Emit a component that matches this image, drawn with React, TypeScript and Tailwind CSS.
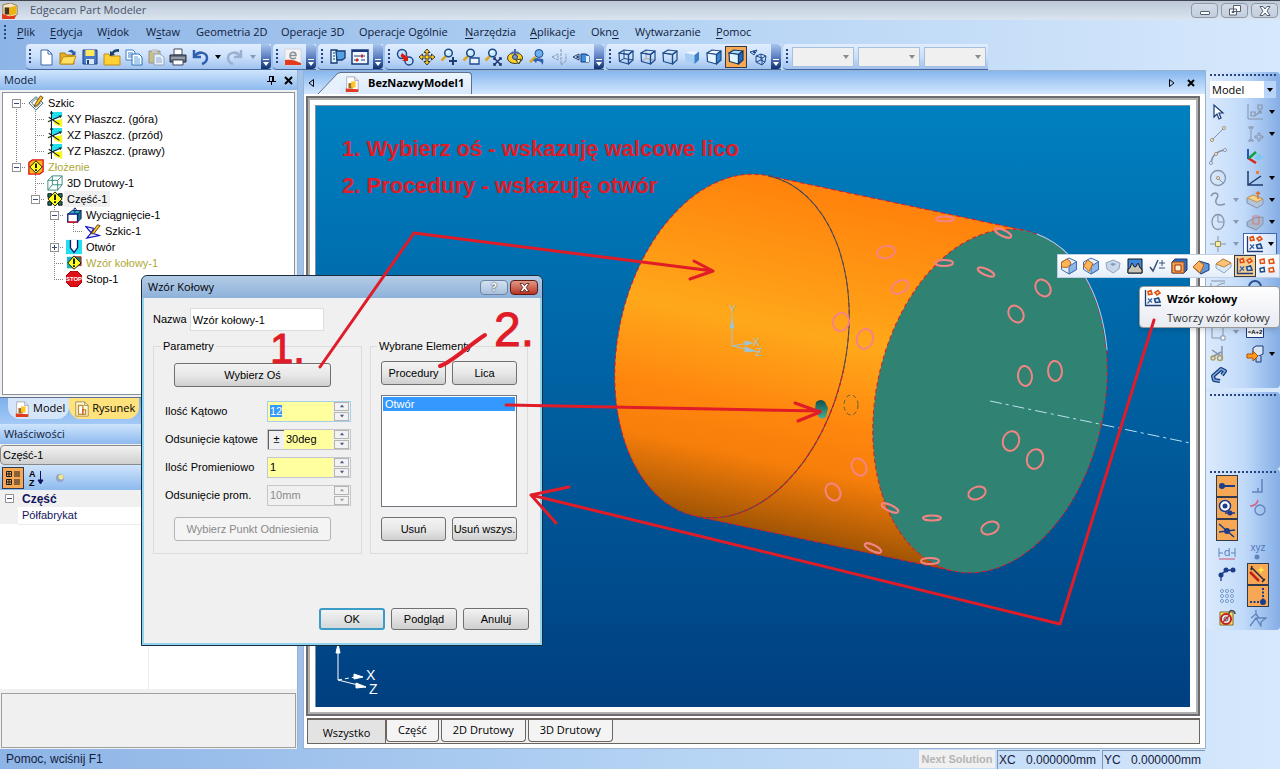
import type { ReactNode } from 'react'

const UI = "font-['Open_Sans','Noto_Sans',sans-serif]"
const SANS = "font-['Liberation_Sans',Arial,sans-serif]"

// ---------- icon helpers ----------

function Ic({ children, className = 'w-[18px] h-[18px]' }: { children: ReactNode; className?: string }) {
  return (
    <svg viewBox="0 0 18 18" fill="none" className={`shrink-0 ${className}`} aria-hidden="true">
      {children}
    </svg>
  )
}

type CubeProps = { top?: string; front?: string; side?: string; stroke?: string; wire?: boolean; hidden?: string }

function Cube({ top = 'none', front = 'none', side = 'none', stroke = '#1d4a8a', wire = false, hidden = '#1d4a8a' }: CubeProps) {
  return (
    <Ic>
      {wire && <path d="M7 2.500v8M7 10.500l-5 3M7 10.500l9 1.500" stroke={hidden} />}
      <g stroke={stroke} strokeWidth="1.2" strokeLinejoin="round">
        <path d="M2 5 7 2 16 3 11.500 6.500z" fill={top} />
        <path d="M2 5 11.500 6.500V16L2.500 13.500z" fill={front} />
        <path d="M11.500 6.500 16 3v9L11.500 16z" fill={side} />
      </g>
    </Ic>
  )
}

// solid block with one orange facet
function Facet({ d }: { d: string }) {
  return (
    <Ic>
      <path d="M9 1 16.500 4.500v8L9 17l-7.500-4.500V5z" fill="#e4effb" stroke="#3f6cae" />
      <path d="M9 9.500 16.500 4.500v8L9 17z" fill="#8fb6e8" stroke="#3f6cae" />
      <path d={d} fill="#ffb458" stroke="#b8661c" strokeLinejoin="round" />
    </Ic>
  )
}

function Lens() {
  return (
    <>
      <path d="M6.500 7.500 1.500 12.500" stroke="#d8a820" strokeWidth="2.500" />
      <circle cx="8.500" cy="5" r="3.800" fill="#c8ecff" stroke="#1d4a8a" strokeWidth="1.500" />
      <circle cx="7.500" cy="4" r="1.200" fill="#fff" />
    </>
  )
}

function DocIcon({ className }: { className?: string }) {
  return (
    <Ic className={className}>
      <path d="M3 1h9l4 4v12H3z" fill="#fff" stroke="#a9a9b4" />
      <path d="M12 1v4h4" fill="#e4e4ee" stroke="#a9a9b4" />
      <path d="M2 14 16 15v3H2z" fill="#e23a1c" />
      <path d="M5 8h5v6H5z" fill="#9a6a28" />
      <path d="M8 6h5v7H8z" fill="#ffc629" />
    </Ic>
  )
}

function SheetIcon() {
  return (
    <Ic className="w-4 h-4">
      <path d="M2 1h10l4 4v12H2z" fill="#fff8dc" stroke="#a08a50" />
      <path d="M12 1v4h4" stroke="#a08a50" />
      <path d="M5 5h5v5h3v5H5z" fill="#fff" stroke="#c09020" strokeWidth="1.500" />
      <path d="M10 9v6" stroke="#d83c20" strokeWidth="1.500" />
    </Ic>
  )
}

function PatternIcon() {
  return (
    <Ic>
      <path d="M1.500 1v15.500H17" stroke="#1f3c78" strokeWidth="1.300" />
      <path d="M3.500 14.500 8 9.500M4 9.500l4 4" stroke="#3a66a8" strokeWidth="1.300" />
      <g stroke="#e05010" strokeWidth="1.600" fill="#fff0d8">
        <path d="m4 2.500 3-1 1 3.500-3.500.500z" />
        <path d="m11 3.500 3-2 2 2.500-3 2z" />
      </g>
      <path d="m10.500 10 4-1 1.500 4-4.500.500z" stroke="#1d4a8a" strokeWidth="1.600" fill="#d8e8f8" />
    </Ic>
  )
}

function RectPatternIcon() {
  return (
    <Ic>
      <g strokeWidth="1.500" fill="#fff4e0">
        <path d="m2 3 4-1 .500 4-4 .500z" stroke="#e05010" />
        <path d="m11 3 4-1 1 4-4.500.500z" stroke="#e05010" />
        <path d="m2 11.500 4-1 .500 4-4 .500z" stroke="#1d4a8a" />
        <path d="m11 11.500 4-1 1 4-4.500.500z" stroke="#e05010" />
      </g>
    </Ic>
  )
}

function Tri({ className = 'text-black' }: { className?: string }) {
  return (
    <svg viewBox="0 0 6 4" className={`w-[6px] h-1 shrink-0 ${className}`} aria-hidden="true">
      <path d="M0 0h6L3 4z" fill="currentColor" />
    </svg>
  )
}

// ---------- top toolbars ----------

const GRAY = '#8593aa'

const fileTools: [string, ReactNode][] = [
  ['Nowy', <Ic><path d="M4 2h7l4 4v11H4z" fill="#fff" stroke="#3f66a8" /><path d="M11 2v4h4" stroke="#3f66a8" /></Ic>],
  ['Otwórz', <Ic><path d="M1 5h5l1 2h8v9H1z" fill="#e8ad22" stroke="#b07a10" /><path d="m4 9 13-1-3 8H1z" fill="#ffe060" stroke="#c08c18" /><path d="M9 4c2-3 5-3 6 0l1.500-1v4h-4l1.200-1c-1-2-3-2-4.700-2" fill="#2a5cb0" /></Ic>],
  ['Zapisz', <Ic><path d="M2 2h14v14H2z" fill="#4a78c8" stroke="#1c3f84" /><path d="M4.500 2h9v6h-9z" fill="#ffe85a" /><path d="M5 11h8v5H5z" fill="#dce8f6" /><path d="M6 12h2v4H6z" fill="#1c3f84" /></Ic>],
  ['Importuj', <Ic><path d="M1 6h5l1 2h10v9H1z" fill="#ffd034" stroke="#c08c18" /><path d="M16 1c-4 0-6 1-7 3L7 3v5l5-1-1.500-1.500C12 4 14 3.500 16 4z" fill="#1c3f64" /></Ic>],
  ['Kopiuj', <Ic><path d="M1 2h7l2 2v8H1z" fill="#fff" stroke="#3a7ec8" /><path d="M3 5h5M3 7h5M3 9h5" stroke="#3a7ec8" /><path d="M7 6h7l3 3v8H7z" fill="#fff" stroke="#2670c0" /><path d="M9 9h4M9 11h6M9 13h6M9 15h6" stroke="#58a0e0" /></Ic>],
  ['Wklej', <Ic><path d="M2 3h11v12H2z" fill="#cbbf80" stroke="#8e9098" /><path d="M5 1h5v4H5z" fill="#c3c8d2" /><path d="M7 6h6l4 3v8H7z" fill="#e8f0fa" stroke="#8fa6c6" /><path d="M9 10h5M9 12h6M9 14h6" stroke="#8fa6c6" /></Ic>],
  ['Drukuj', <Ic><path d="M5 1h8v6H5z" fill="#fff" stroke="#404858" /><path d="M1 7h16v7H1z" fill="#6a7280" stroke="#252c3a" /><path d="M2 10h14" stroke="#c0c8d6" /><path d="M4 12h10v5H4z" fill="#fff" stroke="#404858" /></Ic>],
]

const viewTools: [string, ReactNode][] = [
  ['Obrót', <Ic><circle cx="6" cy="6" r="4.500" fill="#bfe0ff" stroke="#1d4a8a" strokeWidth="1.500" /><circle cx="13" cy="13" r="4" fill="#bfe0ff" stroke="#1d4a8a" strokeWidth="1.500" /><path d="m6 5 5 4 1-2v6H6l2-1.500L4.500 8z" fill="#d81c10" /></Ic>],
  ['Przesuń', <Ic><path d="m9 1 3 3.500h-2V8h3.500V6L17 9l-3.500 3v-2H10v3.500h2L9 17l-3-3.500h2V10H4.500v2L1 9l3.500-3v2H8V4.500H6z" fill="#ffd020" stroke="#3a3a30" /></Ic>],
  ['Powiększ', <Ic><Lens /><path d="M13 9v8M9 13h8" stroke="#1d3a70" strokeWidth="2" /></Ic>],
  ['Okno', <Ic><Lens /><path d="M8 10h9v6H8z" fill="#eaf4ff" stroke="#1d4a8a" strokeWidth="1.300" /></Ic>],
  ['Dopasuj', <Ic><Lens /><path d="m10 10 7 7m0-7-7 7" stroke="#1d3a70" strokeWidth="1.500" /><path d="M10 12v-2h2m3 0h2v2m0 3v2h-2m-3 0h-2v-2" stroke="#1d3a70" strokeWidth="1.500" /></Ic>],
  ['Obróć widok', <Ic><ellipse cx="9" cy="10" rx="7.500" ry="5.500" fill="#ffd020" stroke="#3a3a30" /><path d="M9 1v6M5 6c2-3 6-3 8 0" stroke="#4a68a8" strokeWidth="2" /><circle cx="9" cy="9" r="2.500" fill="#7898c8" stroke="#26406e" /><path d="m10 12 5-1-2 5z" fill="#fff8a0" stroke="#3a3a30" /></Ic>],
  ['Poprzedni', <Ic><circle cx="11" cy="5.500" r="4" fill="#68b0f0" stroke="#1d4a8a" /><path d="M7.500 9 2 14" stroke="#d8a820" strokeWidth="2.500" /><path d="m8 10 7 1c1 3 0 5-1 6 0-3-2-4-5-4l-1 2-3-3z" fill="#2f5fae" /></Ic>],
  ['Normalny', <Ic><path d="m2 9 6-3v6zM11 1v16l5-4V6" stroke={GRAY} strokeDasharray="3 1" /></Ic>],
  ['Widok', <Ic><path d="m1 9 6-3v6z" fill="#e8f2ff" stroke="#1d3a70" /><circle cx="5.500" cy="9" r="1.200" fill="#1d3a70" /><path d="M9 6h5l3 2v6H9z" fill="#3f8fe0" stroke="#173a78" /><path d="M14 8h3v6h-3z" fill="#dff0ff" /></Ic>],
]

const shadeTools: [string, ReactNode][] = [
  ['Krawędziowy', <Cube wire />],
  ['Ukryte szare', <Cube wire hidden="#b0a4a0" />],
  ['Ukryte', <Cube />],
  ['Cieniowany', <Ic><path d="m2 5 5-2 9 1-4.500 3z" fill="#eaf6ff" /><path d="m2 5 9.500 2v9L2.500 13.500z" fill="#a6cef4" /><path d="M11.500 7 16 3.500V12l-4.500 4z" fill="#3b7fc8" /></Ic>],
  ['Przezroczysty', <Cube front="#e6f4ff" side="#3c86d0" top="#f4faff" />],
  ['Cieniowany z krawędziami', <Cube top="#a8dcff" front="#dff4ff" side="#2668b4" stroke="#123870" />],
  ['Perspektywa', <Ic><path d="m1 4 7-2-3 5z" stroke="#1d4a8a" /><circle cx="5" cy="4" r="1.200" fill="#1d4a8a" /><path d="m7 8 5-2 5 2-4 2zM7 8v6l6 3v-7M17 8l-1 6-3 3M12 6v6l-5 2m5-2 4 2" stroke="#1d4a8a" /></Ic>],
]

function Grip() {
  return <span className="w-[2px] h-[15px] shrink-0 bg-[repeating-linear-gradient(#27457f_0_2px,transparent_2px_4px)]" />
}

function ToolBar({ children, overflow = true }: { children: ReactNode; overflow?: boolean }) {
  return (
    <div className="flex h-[26px] rounded-l border-b border-[#3f66a0] bg-linear-to-b from-[#e0edfe] via-[#cbe0fb] to-[#a0c2ee]">
      <div className="flex items-center pl-[3px] pr-[2px] gap-1">
        <Grip />
        <div className="flex items-center">{children}</div>
      </div>
      {overflow && (
        <button aria-label="Więcej przycisków" className="w-[10px] flex flex-col items-center justify-end gap-[2px] pb-[3px] rounded-r-sm bg-linear-to-b from-[#a9c5ee] via-[#6083c4] to-[#12306f]">
          <span className="w-[6px] h-px bg-white" />
          <Tri className="text-white" />
        </button>
      )}
    </div>
  )
}

function ToolButton({ label, active, children }: { label: string; active?: boolean; children: ReactNode }) {
  return (
    <button
      aria-label={label}
      className={`w-[22px] h-[22px] shrink-0 flex items-center justify-center ${active ? 'bg-[#f6a855] border border-[#333a4c]' : ''}`}
    >
      {children}
    </button>
  )
}

function EmptyCombo({ label }: { label: string }) {
  return (
    <div className="relative w-[62px] mr-1 last:mr-0">
      <select disabled aria-label={label} className="block appearance-none w-full h-5 bg-[#f0f0f0] border border-[#a9c0dd]" />
      <span className="absolute right-[5px] top-2"><Tri className="text-[#8a8a8a]" /></span>
    </div>
  )
}

const menu: [string, string, string, string][] = [
  ['', 'P', 'lik', 'w-[33px]'],
  ['', 'E', 'dycja', 'w-[47px]'],
  ['W', 'i', 'dok', 'w-[49px]'],
  ['W', 's', 'taw', 'w-[50px]'],
  ['Geometria 2D', '', '', 'w-[85px]'],
  ['Operacje 3D', '', '', 'w-[78px]'],
  ['Operacje Ogólnie', '', '', 'w-[106px]'],
  ['', 'N', 'arzędzia', 'w-[65px]'],
  ['', 'A', 'plikacje', 'w-[61px]'],
  ['Okn', 'o', '', 'w-[44px]'],
  ['Wytwarzanie', '', '', 'w-[81px]'],
  ['', 'P', 'omoc', 'w-[50px]'],
]

function TopBars() {
  const winBtn = 'w-[27px] h-[15px] flex items-center justify-center border border-[#8d99aa] rounded-sm bg-linear-to-b from-[#d3dbe6] to-[#c3cedd]'
  return (
    <header>
      <div className="h-5 flex items-center justify-between border-t border-[#40444e] bg-linear-to-b from-[#bdc8d8] to-[#dbe5f0] px-[2px]">
        <div className="flex items-center gap-3 text-[#47536a]">
          <Ic className="w-4 h-4">
            <path d="M1 2 10 0l7 3v10l-8 4-8-3z" fill="#f3e6c8" stroke="#8d7340" />
            <path d="m8 5 8-2v9l-8 3z" fill="#eeb312" />
            <path d="M3 5h5v8H3z" fill="#4a3418" />
            <path d="m0 12 8 3 8-1-2 4H0z" fill="#e23a1c" />
          </Ic>
          <span className="text-[11px]">Edgecam Part Modeler</span>
        </div>
        <div className="flex gap-[3px]">
          <button aria-label="Minimalizuj" className={winBtn}>
            <span className="w-[10px] h-1 mt-1 border border-[#555f70] bg-white rounded-[1px]" />
          </button>
          <button aria-label="Przywróć" className={winBtn}>
            <svg viewBox="0 0 12 11" className="w-3 h-[11px]" fill="#fff" stroke="#555f70">
              <path d="M4.500.500h7v6h-7zM.500 4h7v6h-7z" />
              <path d="M3 6.500h2v1H3z" />
            </svg>
          </button>
          <button aria-label="Zamknij" className={winBtn}>
            <svg viewBox="0 0 12 10" className="w-3 h-[10px]" fill="#fff" stroke="#555f70">
              <path d="M1 .500h3l2 2.500L8 .500h3L8 5l3 4.500H8L6 7 4 9.500H1L4 5z" />
            </svg>
          </button>
        </div>
      </div>

      <nav className="h-6 flex items-center pl-1 text-[11px] text-[#10203c]">
        <span className="w-[13px] flex"><Grip /></span>
        {menu.map(([before, key, after, width]) => (
          <button key={before + key + after} className={`${width} text-left whitespace-nowrap`}>
            {before}<u className="underline-offset-2">{key}</u>{after}
          </button>
        ))}
      </nav>

      <div className="h-[26px] flex gap-[2px] pl-[26px]">
        <ToolBar>
          {fileTools.map(([label, icon]) => <ToolButton key={label} label={label}>{icon}</ToolButton>)}
          <ToolButton label="Cofnij">
            <Ic><path d="M3 2v7h7" stroke="#2f5fae" strokeWidth="2.500" /><path d="M4 8c4-6 12-3 12 2 0 3-2 5-5 6" stroke="#2f5fae" strokeWidth="2.500" /></Ic>
          </ToolButton>
          <button aria-label="Lista cofania" className="w-[13px] flex justify-center"><Tri /></button>
          <ToolButton label="Ponów">
            <Ic><path d="M15 2v7H8" stroke="#9ab0d0" strokeWidth="2.500" /><path d="M14 8C10 2 2 5 2 10c0 3 2 5 5 6" stroke="#9ab0d0" strokeWidth="2.500" /></Ic>
          </ToolButton>
          <button aria-label="Lista ponawiania" className="w-[13px] flex justify-center"><Tri className="text-[#8a98b0]" /></button>
        </ToolBar>
        <ToolBar>
          <ToolButton label="Edgecam">
            <Ic><path d="M1 1h16v16H1z" fill="#f4f4f4" stroke="#d0d4dc" /><path d="M1 12c5-1 10 0 16 3v2H1z" fill="#e23a1c" /><path d="M6 7.500h6c0-4-6-4.500-6 0 0 4 4 4 6 2" stroke="#8a8f98" strokeWidth="1.500" /></Ic>
          </ToolButton>
        </ToolBar>
        <ToolBar>
          <ToolButton label="Właściwości">
            <Ic><path d="M2 2h6v13H2z" fill="#dff0ff" stroke="#173a78" strokeWidth="1.300" /><path d="M7 3h9v7l-3 2H8z" fill="#58a0e0" stroke="#173a78" strokeWidth="1.300" /><path d="M4 5h2M4 8h2M4 11h2" stroke="#173a78" /></Ic>
          </ToolButton>
          <ToolButton label="Opcje">
            <Ic><path d="M1 2h16v14H1z" fill="#f2f7ff" stroke="#173a78" strokeWidth="1.500" /><path d="M1 3h16" stroke="#173a78" strokeWidth="2" /><path d="M3 8h11M3 12h5m2 0h4" stroke="#173a78" /><path d="M10 6.500h2v3h-2zM5 10.500h2v3H5z" fill="#d82818" /></Ic>
          </ToolButton>
        </ToolBar>
        <ToolBar>
          {viewTools.map(([label, icon]) => <ToolButton key={label} label={label}>{icon}</ToolButton>)}
        </ToolBar>
        <ToolBar>
          {shadeTools.map(([label, icon], i) => <ToolButton key={label} label={label} active={i === 5}>{icon}</ToolButton>)}
        </ToolBar>
        <ToolBar overflow={false}>
          <EmptyCombo label="Warstwa" />
          <EmptyCombo label="Kolor" />
          <EmptyCombo label="Styl linii" />
        </ToolBar>
      </div>
    </header>
  )
}

// ---------- left side: model tree and properties ----------

const treeIcons: Record<string, ReactNode> = {
  sketch: <Ic className="w-4 h-4"><path d="m1 9 8-7 8 7-8 8z" fill="#fff" stroke="#2a5a68" /><path d="m4 9 5-5 5 5-5 5z" stroke="#2a5a68" /><path d="m8 10 6-9 3 2-6 8-4 2z" fill="#ffc020" stroke="#5a4010" /></Ic>,
  plane: <Ic className="w-4 h-4"><path d="M5 1h12v5L6 10z" fill="#20e0f0" /><path d="m7 11 10-2v9l-8-3z" fill="#f8f810" /><path d="M5 0v18M1 12l14-6M2 7l12 8" stroke="#102020" strokeWidth="1.200" /><path d="m5 0-2 3h4zM17 5l-4 0 2 3z" fill="#102020" /></Ic>,
  assembly: <Ic className="w-4 h-4"><path d="M1 4 5 1h12v13l-4 3H1z" fill="#ffb820" stroke="#e01010" strokeWidth="1.500" /><path d="m9 2 7 7-7 7-7-7z" fill="#ffff20" stroke="#000" /><path d="M9 5v5m0 1.500v2" stroke="#000" strokeWidth="2" /></Ic>,
  wire: <Ic className="w-4 h-4"><path d="M1 6h11v11H1zM6 1h11v10H6zM1 6l5-5m6 5 5-5m-5 16 5-6M1 17l5-6" stroke="#2a8478" /></Ic>,
  part: <Ic className="w-4 h-4"><path d="M1 3h4v4H1zm12 0h4v4h-4zM1 12h4v4H1zm12 0h4v4h-4z" fill="#207868" stroke="#000" /><path d="m9 1 8 8-8 8-8-8z" fill="#ffff20" stroke="#000" /><path d="M9 4v6m0 1.500v2" stroke="#000" strokeWidth="2" /></Ic>,
  extrude: <Ic className="w-4 h-4"><path d="m2 8 5-4h10l-4 4z" fill="#30b0c0" stroke="#0a1a60" /><path d="m13 8 4-4v9l-4 4z" fill="#187888" stroke="#0a1a60" /><path d="M2 8h11v9H2z" fill="#fff" stroke="#0a1a80" strokeWidth="1.500" /><path d="M2 17h11" stroke="#e01010" strokeWidth="1.500" /><path d="M10 7V1M8 3l2-2 2 2" stroke="#0a1a80" /></Ic>,
  sketch2: <Ic className="w-4 h-4"><path d="m1 4 9 2-3 5 9 3-14 3 5-6z" fill="#e8e8ff" stroke="#1010c0" strokeWidth="1.300" /><path d="m7 12 7-10 3 1-7 9z" fill="#ffc020" stroke="#5a4010" /></Ic>,
  hole: <Ic className="w-4 h-4"><path d="M0 1h18v16H0z" fill="#20e0f0" /><path d="M5 1h8v10l-4 4-4-4z" fill="#fff" /><path d="M5 1v9l4 5 4-5V1" stroke="#101070" strokeWidth="1.500" /></Ic>,
  pattern: <Ic className="w-4 h-4"><path d="M1 2h7v13H1z" fill="#20b0c0" /><path d="M10 2h7v10h-7z" fill="#208070" stroke="#c01010" /><path d="m9 1 8 8-8 7-7-7z" fill="#ffff20" stroke="#000" /><path d="M9 4v6m0 1.500v2" stroke="#000" strokeWidth="2" /></Ic>,
}

function StopIcon() {
  return (
    <svg viewBox="0 0 16 16" className="w-4 h-4 shrink-0" aria-hidden="true">
      <path d="M5 0h6l5 5v6l-5 5H5l-5-5V5z" fill="#e01018" stroke="#900" />
      <text x="8" y="10" textAnchor="middle" fontSize="6" fontWeight="bold" fill="#fff" fontFamily="Liberation Sans">STOP</text>
    </svg>
  )
}

// each cell lists the guide lines it holds: u(p), d(own), r(ight), and a +/- box
const tree: { cells: string[]; icon: string; label: string; tone?: string }[] = [
  { cells: ['dr-'], icon: 'sketch', label: 'Szkic' },
  { cells: ['ud', 'udr'], icon: 'plane', label: 'XY Płaszcz. (góra)' },
  { cells: ['ud', 'udr'], icon: 'plane', label: 'XZ Płaszcz. (przód)' },
  { cells: ['ud', 'ur'], icon: 'plane', label: 'YZ Płaszcz. (prawy)' },
  { cells: ['ur-'], icon: 'assembly', label: 'Złożenie', tone: 'text-[#b0a838]' },
  { cells: ['', 'udr'], icon: 'wire', label: '3D Drutowy-1' },
  { cells: ['', 'ur-'], icon: 'part', label: 'Część-1', tone: 'bg-[#f0f0f0]' },
  { cells: ['', '', 'udr-'], icon: 'extrude', label: 'Wyciągnięcie-1' },
  { cells: ['', '', 'ud', 'ur'], icon: 'sketch2', label: 'Szkic-1' },
  { cells: ['', '', 'udr+'], icon: 'hole', label: 'Otwór' },
  { cells: ['', '', 'udr'], icon: 'pattern', label: 'Wzór kołowy-1', tone: 'text-[#b0a838]' },
  { cells: ['', '', 'ur'], icon: 'stop', label: 'Stop-1' },
]

function TreeCell({ spec }: { spec: string }) {
  const box = spec.includes('+') || spec.includes('-')
  return (
    <svg viewBox="0 0 19 16" className="w-[19px] h-4 shrink-0" shapeRendering="crispEdges" fill="none" aria-hidden="true">
      <g stroke="#808080" strokeDasharray="1 1">
        {spec.includes('u') && <path d="M9.500 0v8" />}
        {spec.includes('d') && <path d="M9.500 8v8" />}
        {spec.includes('r') && <path d="M9 8.500h10" />}
      </g>
      {box && <path d="M5.500 4.500h8v8h-8z" fill="#fff" stroke="#919191" />}
      {box && <path d={spec.includes('+') ? 'M7 8.500h5M9.500 6v5' : 'M7 8.500h5'} stroke="#3a4a78" />}
    </svg>
  )
}

function PanelHeader({ children, tools }: { children: ReactNode; tools?: ReactNode }) {
  return (
    <div className="h-5 flex items-center justify-between px-1 text-[11px] text-[#10203c] bg-linear-to-b from-[#cfe4fc] to-[#8dbaee]">
      <h2>{children}</h2>
      {tools}
    </div>
  )
}

function LeftPanels() {
  return (
    <aside className="w-[298px] shrink-0 flex flex-col bg-[#f0f0f0] border-r border-[#9db2cc]">
      <PanelHeader
        tools={
          <div className="flex gap-2">
            <button aria-label="Przypnij">
              <svg viewBox="0 0 9 9" className="w-[9px] h-[9px]" stroke="#000" fill="none" shapeRendering="crispEdges"><path d="M2.500 5V.500h4V5M5.500 0v5M0 5.500h9M4.500 5v4" /></svg>
            </button>
            <button aria-label="Zamknij panel">
              <svg viewBox="0 0 9 9" className="w-[9px] h-[9px]" stroke="#000" strokeWidth="2"><path d="m1 1 7 7M8 1 1 8" /></svg>
            </button>
          </div>
        }
      >
        Model
      </PanelHeader>
      <div className="p-[2px]">
        <ul role="tree" aria-label="Model" className={`h-[303px] bg-white border border-[#8a929e] pl-1 pt-[2px] text-[11px] text-black ${SANS}`}>
          {tree.map((row) => (
            <li key={row.label} role="treeitem" className="h-4 flex items-center whitespace-nowrap">
              {row.cells.map((c, i) => <TreeCell key={i} spec={c} />)}
              <span className="w-[19px] flex justify-center">{row.icon === 'stop' ? <StopIcon /> : treeIcons[row.icon]}</span>
              <span className={`px-[3px] leading-4 ${row.tone ?? ''}`}>{row.label}</span>
            </li>
          ))}
        </ul>
      </div>
      <div className="h-[27px] flex pl-2 text-[11px] border-t border-[#5f7290] bg-linear-to-b from-[#7db0ec] to-[#a4c9f6]">
        <button className="h-[21px] pl-[6px] pr-1 flex items-center gap-[3px] rounded-b-xl bg-[#d5e6fb]">
          <DocIcon className="w-4 h-4" />Model
        </button>
        <button className="h-[21px] pl-[5px] pr-1 flex items-center gap-[2px] rounded-b-xl bg-[#ffe27c]">
          <SheetIcon />Rysunek
        </button>
      </div>
      <PanelHeader>Właściwości</PanelHeader>
      <select aria-label="Obiekt" className={`appearance-none h-5 mt-px px-[2px] text-[11px] border border-[#8a8a8a] rounded-sm bg-linear-to-b from-[#f2f2f2] to-[#cfcfcf] ${SANS}`}>
        <option>Część-1</option>
      </select>
      <div className="h-[25px] flex items-center gap-[2px] pl-[2px] bg-linear-to-b from-[#cfe4fc] to-[#8dbaee]">
        <ToolButton label="Według kategorii" active>
          <Ic><path d="M2.500 2.500h5v5h-5zm0 8h5v5h-5zM5 3v4M3 5h4M5 11v4M3 13h4M10 3h6M10 5h6M10 7h6M10 11h6M10 13h6M10 15h6" stroke="#1a1a1a" /></Ic>
        </ToolButton>
        <ToolButton label="Alfabetycznie">
          <svg viewBox="0 0 18 18" className="w-[18px] h-[18px]">
            <text x="1" y="8" fontSize="9" fontWeight="bold" fontFamily="Liberation Sans">A</text>
            <text x="1" y="17" fontSize="9" fontWeight="bold" fontFamily="Liberation Sans">Z</text>
            <path d="M12.500 2v12M10 11l2.500 4 2.500-4z" stroke="#101060" fill="#101060" />
          </svg>
        </ToolButton>
        <ToolButton label="Podpowiedź">
          <Ic><circle cx="8" cy="9" r="4" fill="#8fa6c8" /><circle cx="9" cy="8" r="2.500" fill="#f4e48a" /></Ic>
        </ToolButton>
      </div>
      <div className="flex-1 bg-white text-[11px] text-[#14145c] flex flex-col">
        <table className={`w-full border-collapse ${SANS}`}>
          <tbody>
            <tr className="h-[17px] bg-[#f0f0f0]">
              <td className="w-[18px] p-0">
                <svg viewBox="0 0 9 9" className="w-[9px] h-[9px] ml-[5px]" fill="#fff"><path d="M.500.500h8v8h-8z" stroke="#919191" /><path d="M2 4.500h5" stroke="#3a4a78" /></svg>
              </td>
              <th colSpan={2} className="p-0 pl-1 text-left leading-4 text-xs">Część</th>
            </tr>
            <tr className="h-[17px]">
              <td className="bg-[#f0f0f0]" />
              <th className="w-[131px] p-0 pl-1 text-left font-normal leading-4 border-b border-[#ececec]">Półfabrykat</th>
              <td className="border-b border-l border-[#ececec]" />
            </tr>
          </tbody>
        </table>
        <div className="flex-1 w-[149px] border-r border-[#ececec]" />
      </div>
      <div className="h-[55px] mt-1 mx-px border border-[#a0a0a0] bg-[#f0f0f0]" />
      <div className="h-px" />
    </aside>
  )
}

// ---------- centre: 3D view ----------

const holes: [number, number, number, number, number][] = [
  [945, 219, 9, 2.5, 0], [1003, 233, 9, 3, 25], [944, 263, 9, 3, 0], [986, 272, 9, 3, 24],
  [886, 252, 9, 6, -12], [900, 287, 9, 6, -30], [841, 322, 8, 9, 20], [865, 339, 8, 10, 15],
  [1043, 288, 7, 9, -35], [1016, 314, 7, 9, -35], [1025, 376, 7, 10, -5], [1055, 371, 7, 10, -3],
  [1011, 441, 8, 10, 18], [1035, 459, 8, 10, 18], [977, 493, 9, 6, -20], [990, 528, 9, 6, -20],
  [859, 467, 7, 9, -30], [833, 492, 7, 9, -30], [890, 508, 9, 3, 25], [932, 518, 9, 2.5, 0],
  [873, 548, 9, 3, 25], [930, 561, 9, 3, 0],
]

function Cylinder() {
  return (
    <svg viewBox="316 106 874 601" className="absolute inset-0 w-full h-full" fill="none" aria-label="Walec z otworami">
      <defs>
        <linearGradient id="body" x1="0" y1="172" x2="0" y2="521" gradientUnits="userSpaceOnUse">
          <stop offset="0" stopColor="#ff820c" />
          <stop offset="0.2" stopColor="#ff9312" />
          <stop offset="0.42" stopColor="#ffa81a" />
          <stop offset="0.66" stopColor="#ff860e" />
          <stop offset="0.8" stopColor="#f67e0a" />
          <stop offset="1" stopColor="#a05404" />
        </linearGradient>
        <linearGradient id="hole" x1="0" y1="0" x2="0" y2="1">
          <stop offset="0" stopColor="#0f4f50" />
          <stop offset="1" stopColor="#48b090" />
        </linearGradient>
      </defs>
      <g transform="rotate(12 732 346)">
        <path d="M732 172h264v348H732a114 174 0 0 1 0-348z" fill="url(#body)" />
        <path d="M732 172h264M732 520h264" stroke="#e01828" strokeDasharray="5 3" />
        <ellipse cx="732" cy="346" rx="114" ry="174" stroke="#e01828" strokeDasharray="4 3" />
        <path d="M732 172a114 174 0 0 1 0 348" stroke="#39505c" />
        <path d="M846 346a114 174 0 0 1-114 174" stroke="#e01828" strokeDasharray="4 3" />
      </g>
      <g transform="rotate(12 990 401)">
        <ellipse cx="990" cy="401" rx="114" ry="174" fill="#308272" />
        <ellipse cx="990" cy="401" rx="114" ry="174" stroke="#e01828" strokeDasharray="4 3" />
        <path d="M1001 228A114 174 0 0 1 1094 327" stroke="#9fd8f4" />
      </g>
      <g stroke="#f48484" strokeWidth="2">
        {holes.map(([x, y, rx, ry, a]) => (
          <ellipse key={`${x}-${y}`} cx={x} cy={y} rx={rx} ry={ry} transform={`rotate(${a} ${x} ${y})`} />
        ))}
      </g>
      <ellipse cx="851" cy="405" rx="7" ry="10" stroke="#5a6038" strokeDasharray="4 3" />
      <path d="M816 402q5-4 9 0l3 6-2 9q-5 4-8-1l-3-7z" fill="url(#hole)" />
      <path d="M990 401 1190 443" stroke="#b8e0f4" strokeDasharray="12 4 3 4" />
      <g stroke="#9cc4d4">
        <path d="M732 346v-32M732 346l28 6M732 346l17-3" />
        <path d="m730 328 2-8 2 8zM745 341l8 2-8 2zM745 347l10 4-10 1z" fill="#9cc4d4" />
      </g>
      <g fill="#9cc4d4" fontSize="10" fontFamily="Liberation Sans">
        <text x="729" y="313">Y</text>
        <text x="753" y="346">X</text>
        <text x="756" y="356">Z</text>
      </g>
      <g stroke="#fff">
        <path d="M338 680v-40M338 680l28 7" />
        <path d="m338 680 17-3" strokeDasharray="4 3" />
        <path d="m336 653 2-9 2 9zM354 674l9 3-9 2zM356 683l10 4-10 1z" fill="#fff" />
      </g>
      <g fill="#fff" fontSize="14" fontFamily="Liberation Sans">
        <text x="366" y="680">X</text>
        <text x="369" y="694">Z</text>
      </g>
    </svg>
  )
}

function ModelView() {
  const sheet = 'h-[22px] mr-[2px] px-[11px] border-x border-b border-[#6b6660] rounded-b-sm bg-[#f4f4f4] whitespace-nowrap'
  return (
    <main className="flex-1 min-w-0 ml-[5px] flex flex-col border border-[#9db2cc] bg-white">
      <div className="h-[23px] flex items-end bg-linear-to-b from-[#86b7ee] to-[#d3e7fd] text-[11px]">
        <button aria-label="Poprzednia karta" className="w-[14px] h-[22px] flex items-center justify-center">
          <svg viewBox="0 0 6 8" className="w-[6px] h-2" fill="none" stroke="#000"><path d="M5.500.500v7L1 4z" /></svg>
        </button>
        <svg viewBox="0 0 22 22" className="w-[22px] h-[22px]" aria-hidden="true"><path d="M0 22 20 1h2v21z" fill="#e6f1fd" /><path d="M0 22 20 1h2" fill="none" stroke="#60708c" /></svg>
        <button className="h-[22px] w-[132px] flex items-center gap-2 pl-1 font-bold whitespace-nowrap border-t border-r border-[#60708c] rounded-tr bg-linear-to-b from-[#ecf6fe] to-[#d9e8fc]">
          <DocIcon className="w-4 h-4" />BezNazwyModel1
        </button>
        <div className="flex-1" />
        <div className="h-[22px] flex items-center gap-3 pr-[10px]">
          <button aria-label="Następna karta"><svg viewBox="0 0 6 8" className="w-[6px] h-2" fill="none" stroke="#000"><path d="M.500.500v7L5 4z" /></svg></button>
          <button aria-label="Zamknij kartę"><svg viewBox="0 0 8 8" className="w-2 h-2" stroke="#000" strokeWidth="2"><path d="m1 1 6 6M7 1 1 7" /></svg></button>
        </div>
      </div>
      <div className="flex-1 flex flex-col pl-[2px] pr-[5px] pb-1 pt-[2px]">
        <div className="flex-1 flex flex-col border-2 border-[#6b6b70] bg-[#b0b0b0] pt-px pl-px pr-[2px] pb-[2px]">
          <div className="flex-1 flex flex-col bg-white border-t border-l border-[#b0aca8] pt-[5px] pl-[5px] pr-[6px] pb-[5px]">
            <section className="relative flex-1 overflow-hidden border-t border-l border-[#8090a0] bg-linear-to-b from-[#0080c0] to-[#003f80]">
              <Cylinder />
              <div className={`relative pl-[26px] pt-6 text-[22px] leading-[37px] font-bold text-[#e01c28] whitespace-nowrap ${SANS}`}>
                <p>1. Wybierz oś - wskazuję walcowe lico</p>
                <p>2. Procedury - wskazuję otwór</p>
              </div>
            </section>
          </div>
        </div>
        <div className="h-[26px] ml-px mt-[2px] flex items-start border border-t-2 border-[#6b6660] bg-[#f0f0f0] text-[11px] text-black">
          <button className="h-[23px] w-[78px] pt-1 bg-[#e3e3e3] border-r border-[#6b6660]">Wszystko</button>
          <button className={sheet}>Część</button>
          <button className={sheet}>2D Drutowy</button>
          <button className={sheet}>3D Drutowy</button>
        </div>
      </div>
    </main>
  )
}

// ---------- right side: tool palette ----------

const palette: { a?: ReactNode; aMore?: boolean; b?: ReactNode; bMore?: boolean; hot?: boolean }[] = [
  {
    a: <Ic><path d="M5 2v12l3-3 2 5 2-1-2-5h4z" fill="#fff" stroke="#173a78" strokeWidth="1.200" /></Ic>,
    b: <Ic><path d="M2 1v15h15" stroke={GRAY} /><path d="M5 9h4v4H5zM12 2h4v4h-4zM10 12l5-4m0 3V8h-3" stroke={GRAY} strokeWidth="1.200" /></Ic>,
    bMore: true,
  },
  {
    a: <Ic><path d="M3 15 15 3" stroke={GRAY} /><circle cx="3" cy="15" r="1.500" fill="#fff" stroke="#a08868" /><circle cx="15" cy="3" r="1.500" fill="#fff" stroke="#a08868" /></Ic>,
    b: <Ic><path d="M2 2h6M2 16h6M5 2v14M3 4l2-2 2 2M3 14l2 2 2-2" stroke={GRAY} /><path d="M12 8h2v3h3v2h-3v3h-2v-3H9v-2h3z" stroke={GRAY} /></Ic>,
    bMore: true,
  },
  {
    a: <Ic><path d="M2 16C3 9 8 4 16 3" stroke={GRAY} strokeWidth="1.500" /><circle cx="2" cy="16" r="1.500" fill="#fff" stroke={GRAY} /><circle cx="7" cy="7" r="1.500" fill="#fff" stroke="#a08868" /><circle cx="16" cy="3" r="1.500" fill="#fff" stroke={GRAY} /></Ic>,
    b: <Ic><path d="m8 11 5-5 5 4-5 4z" fill="#80c8f0" /><path d="M2 11l8 5" stroke="#d82818" strokeWidth="2.500" /><path d="M2 12V2" stroke="#2054c0" strokeWidth="2" /><path d="m3 11 7-6" stroke="#10a040" strokeWidth="2.500" /></Ic>,
  },
  {
    a: <Ic><circle cx="9" cy="9" r="7.500" stroke={GRAY} strokeWidth="1.300" /><path d="m9 9 5 5" stroke={GRAY} /><circle cx="9" cy="9" r="1.500" fill="#fff" stroke="#a08868" /></Ic>,
    b: <Ic><path d="M2 2v14h15M2 16l13-9" stroke="#1d3a70" strokeWidth="1.500" /><path d="M10 2h3v3h-3z" fill="#f08030" /></Ic>,
    bMore: true,
  },
  {
    a: <Ic><path d="M2 5c3-5 9-3 6 2s0 9 8 6" stroke={GRAY} strokeWidth="1.500" /></Ic>,
    aMore: true,
    b: <Ic><path d="m1 7 6-3 10 4v5l-6 4-10-5z" fill="#b4c4da" stroke={GRAY} /><path d="m1 7 6-3 10 4-6 3z" fill="#f6d28a" stroke="#c09858" /><path d="M12 8V1m-2 2 2-2 2 2" stroke="#e07030" strokeWidth="1.500" /></Ic>,
    bMore: true,
  },
  {
    a: <Ic><ellipse cx="9" cy="9" rx="6" ry="7.500" stroke={GRAY} strokeWidth="1.300" /><path d="M9 2v7h5" stroke={GRAY} /></Ic>,
    aMore: true,
    b: <Ic><path d="m1 9 7-4 9-1v7l-7 6-9-4z" fill="#a8b8cf" stroke={GRAY} /><path d="M7 3h6v8H7z" stroke="#d87878" /></Ic>,
    bMore: true,
  },
  {
    a: <Ic><path d="M9 1v16M1 9h16" stroke={GRAY} /><path d="M6.500 6.500h5v5h-5z" fill="#f4f0a0" stroke="#98905c" /></Ic>,
    aMore: true,
    b: <PatternIcon />,
    bMore: true,
    hot: true,
  },
  {},
  {
    a: <Ic><path d="M2 2h14M2 4v13m2 0c0-8 4-12 12-13" stroke={GRAY} /></Ic>,
    b: <Ic><path d="M3 8a6 6 0 0 1 12 0l-4 0 4 5" stroke="#2a5090" strokeWidth="2" /></Ic>,
  },
  {},
  {
    a: <Ic><path d="M3 3h11v12H3z" stroke={GRAY} /><path d="M12 13h4v4h-4z" fill="#fff" stroke={GRAY} /></Ic>,
    aMore: true,
    b: (
      <svg viewBox="0 0 18 18" className="w-[18px] h-[18px]"><path d="M.500 3.500h17v11H.500z" fill="#f4f8ff" stroke="#173a78" /><text x="9" y="11" textAnchor="middle" fontSize="6" fontWeight="bold" fontFamily="Liberation Sans">=A+2</text></svg>
    ),
  },
  {
    a: <Ic><path d="m3 5 9 6M3 12l9-5M13 1v14" stroke={GRAY} strokeWidth="1.500" /><circle cx="11" cy="13" r="2.500" stroke="#b0a060" strokeWidth="1.500" /><circle cx="4" cy="13" r="2" stroke="#b0a060" strokeWidth="1.500" /></Ic>,
    b: <Ic><path d="M7 3l3-2h7v8l-4 2H7z" fill="#d8e4f2" stroke="#173a78" /><path d="M10 11v6h5v-6" fill="#b8ccea" stroke="#173a78" /><path d="M1 9h6V6l5 5-5 5v-3H1z" fill="#ff9a20" stroke="#b05000" /></Ic>,
    bMore: true,
  },
  {
    a: <Ic><path d="M13 8 16 4l-4-2-8 7 1 4 6 1" stroke="#173a78" strokeWidth="4" strokeLinejoin="round" /><path d="M13 8 16 4l-4-2-8 7 1 4 6 1" stroke="#78a8e0" strokeWidth="1.500" /></Ic>,
  },
]

const snaps: [ReactNode, boolean, ReactNode, boolean][] = [
  [
    <Ic><circle cx="4" cy="9" r="3" fill="#1c3c8c" /><path d="M4 9h13" stroke="#1c3c8c" strokeWidth="2" /></Ic>, true,
    <Ic><path d="M13 2v13H3M9 11v4" stroke="#5f84bc" strokeWidth="1.500" /></Ic>, false,
  ],
  [
    <Ic><circle cx="7" cy="7" r="5.500" fill="#fff" stroke="#1c3c8c" strokeWidth="1.500" /><circle cx="7" cy="7" r="2.500" fill="#1c3c8c" /><path d="M7 14h10" stroke="#1c3c8c" strokeWidth="1.500" /><circle cx="12" cy="14" r="2.500" fill="#1c3c8c" /></Ic>, true,
    <Ic><circle cx="11" cy="11" r="5" stroke="#5f84bc" strokeWidth="1.300" /><path d="M1 7c5 0 7-2 8-6" stroke="#d86088" strokeWidth="1.500" /></Ic>, false,
  ],
  [
    <Ic><path d="m1 3 15 13M1 11l16-2" stroke="#1c3c8c" strokeWidth="1.500" /><circle cx="9" cy="10" r="3" fill="#1c3c8c" /></Ic>, true,
    null, false,
  ],
  [
    <Ic><path d="M1 5v9M17 5v9M1 10h4m8 0h4" stroke="#5f84bc" /><path d="M1 16h16" stroke="#d05070" /><text x="9" y="13" textAnchor="middle" fontSize="11" fill="#4f78b8" fontFamily="Open Sans">d</text></Ic>, false,
    <Ic><text x="9" y="8" textAnchor="middle" fontSize="10" fill="#4f78b8" fontFamily="Liberation Sans">xyz</text><circle cx="8" cy="14" r="2.500" fill="#5f84bc" /></Ic>, false,
  ],
  [
    <Ic><path d="M3 16v-6c2-3 5-5 11-5" stroke="#1c3c8c" strokeWidth="1.300" /><circle cx="3" cy="10" r="2.500" fill="#1c3c8c" /><circle cx="8" cy="5" r="2.500" fill="#1c3c8c" /><circle cx="15" cy="5" r="2.500" fill="#1c3c8c" /></Ic>, false,
    <Ic><path d="m3 3 12 12" stroke="#282838" strokeWidth="1.500" /><path d="m1 7 9 9" stroke="#c02020" strokeWidth="2.500" /><path d="m3 1-1 4m14 9-3 3" stroke="#282838" strokeWidth="1.500" /><path d="m12 1 1 3 3 1-3 1-1 3-1-3-3-1 3-1z" fill="#ffe84a" /></Ic>, true,
  ],
  [
    <Ic><g fill="#e8f2ff" stroke="#6f98cc"><circle cx="4" cy="4" r="1.500" /><circle cx="9" cy="4" r="1.500" /><circle cx="14" cy="4" r="1.500" /><circle cx="4" cy="9" r="1.500" /><circle cx="9" cy="9" r="1.500" /><circle cx="14" cy="9" r="1.500" /><circle cx="4" cy="14" r="1.500" /><circle cx="9" cy="14" r="1.500" /><circle cx="14" cy="14" r="1.500" /></g></Ic>, false,
    <Ic><path d="M14 1v12M1 15h11" stroke="#1c3c8c" strokeWidth="2" strokeDasharray="2 1.500" /><circle cx="14" cy="15" r="3" fill="#1c3c8c" /></Ic>, true,
  ],
  [
    <Ic><path d="M2 3h13v13H2z" fill="#ffe060" stroke="#806a20" /><circle cx="8" cy="10" r="5" fill="#e8ecf0" stroke="#c02020" strokeWidth="2" /><circle cx="8" cy="10" r="2" stroke="#505868" /><path d="m5 13 6-6" stroke="#c02020" strokeWidth="1.500" /><path d="M11 5c0-5 6-4 6 0" stroke="#404858" strokeWidth="1.500" /></Ic>, false,
    <Ic><path d="M7 1v4L2 9m5-4 3 4M1 17l6-8h10l-5 4v4l-5-8" stroke="#5f84bc" strokeWidth="1.300" /></Ic>, false,
  ],
]

function DotGrip() {
  return <div className="mx-1 h-[2px] bg-[repeating-linear-gradient(90deg,#27457f_0_2px,transparent_2px_4px)]" />
}

const railBg = 'rounded-sm bg-linear-to-r from-[#dbeafd] via-[#c2dbf9] to-[#85aee6]'

function RightRail() {
  return (
    <aside className="w-[74px] shrink-0 flex flex-col pt-[2px]">
      <div className={`${railBg} pt-[2px] pb-px`}>
        <DotGrip />
        <div className="relative mx-1 mt-[5px] mb-[3px]">
          <select aria-label="Tryb" className="block appearance-none w-full h-[17px] pl-[2px] text-[11px] leading-4 bg-white text-black">
            <option>Model</option>
          </select>
          <span className="pointer-events-none absolute right-0 top-0 w-3 h-[17px] flex items-center justify-center bg-[#b8d4f8]"><Tri /></span>
        </div>
        {palette.map((row, i) => (
          <div key={i} className="h-[22px] pl-px grid grid-cols-[22px_14px_24px_10px] items-center justify-items-center">
            {row.a ? <button aria-label={`Szkic ${i + 1}`}>{row.a}</button> : <span />}
            {row.aMore ? <Tri className="text-[#8a98b0]" /> : <span />}
            {row.hot ? (
              <button aria-label={`Operacja ${i + 1}`} className="col-span-2 w-[34px] h-[22px] px-[2px] flex items-center justify-between border border-[#3f66b0] bg-linear-to-r from-white to-[#cfe2fb]">{row.b}<Tri /></button>
            ) : (
              <>
                {row.b ? <button aria-label={`Operacja ${i + 1}`}>{row.b}</button> : <span />}
                {row.bMore ? <Tri /> : <span />}
              </>
            )}
          </div>
        ))}
      </div>
      <div className={`${railBg} h-[77px] mt-1 pt-[2px]`}><DotGrip /></div>
      <div className={`${railBg} pt-[2px] pb-px`}>
        <DotGrip />
        <div className="mt-[2px] pl-[10px] grid grid-cols-[22px_22px] gap-x-[9px]">
          {snaps.map(([a, aOn, b, bOn], i) => [
            <ToolButton key={`a${i}`} label={`Przyciąganie ${i + 1}`} active={aOn}>{a}</ToolButton>,
            b ? <ToolButton key={`b${i}`} label={`Wiązanie ${i + 1}`} active={bOn}>{b}</ToolButton> : <span key={`b${i}`} />,
          ])}
        </div>
      </div>
    </aside>
  )
}

const flyout: [string, ReactNode][] = [
  ['Zaokrąglenie', <Facet d="M1.500 5.500 7 2q4 2 4 5l-4 3.500-5.500-.500z" />],
  ['Fazowanie', <Facet d="m1.500 9 4-6 5.500 3.500-4 8z" />],
  ['Skorupa', <Ic><path d="m2 6 7-3 7 3-1 6-6 4-6-4z" fill="#c8d8ea" stroke="#90a4bc" /><path d="m6 7 3-1 3 1-3 2z" fill="#8098b8" /></Ic>],
  ['Gwint', <Ic><path d="M2 2h14v14H2z" fill="#3f86d8" stroke="#101820" /><path d="M2 16v-4c3 0 3-6 4-6s1 4 3 4 2-4 3-4 1 6 4 6v4z" fill="#c8c4b8" stroke="#101820" /></Ic>],
  ['Tolerancja', <Ic><path d="m2 10 3 4 5-11" stroke="#3a5078" strokeWidth="1.500" /><path d="M11 6h6M14 3v6M11 11h6" stroke="#3a5078" /></Ic>],
  ['Kieszeń', <Ic><path d="m2 5 3-3h12v11l-3 3H2z" fill="#2f6cc0" stroke="#173a78" /><path d="M2 5h12v11H2z" fill="#f0a050" stroke="#a04810" /><path d="M5 8h6v6H5z" fill="#fff0d0" stroke="#a03010" /></Ic>],
  ['Pochylenie', <Ic><path d="m1 10 6-6 10 3v6l-8 4z" fill="#5f94d8" stroke="#173a78" /><path d="m1 10 6-6 5 4-4 8z" fill="#ffb060" stroke="#b06010" /></Ic>],
  ['Podział', <Ic><path d="m2 7 7-5 8 4v4l-7 6-8-5z" fill="#dbe8f6" stroke="#8ea4c0" /><path d="m2 7 7-5 8 4-7 4z" fill="#ffc47a" stroke="#c08030" /></Ic>],
  ['Wzór kołowy', <PatternIcon />],
  ['Wzór prostokątny', <RectPatternIcon />],
]

// ---------- pattern dialog ----------

const btn = 'h-6 border border-[#707070] rounded-[3px] bg-linear-to-b from-[#f3f3f3] via-[#e8e8e8] to-[#cfcfcf] text-center whitespace-nowrap'

function Spin({ id, label, value, prefix, focus, disabled }: { id: string; label: string; value: string; prefix?: boolean; focus?: boolean; disabled?: boolean }) {
  return (
    <div className="h-7 flex items-center justify-between">
      <label htmlFor={id}>{label}</label>
      <div className={`w-[84px] h-[21px] flex items-center border ${focus ? 'border-[#a8cfe8]' : 'border-[#c4c8cc]'}`}>
        {prefix && <button aria-label="Zmień znak" className="w-4 h-[19px] shrink-0 border-l border-t border-[#606060] bg-[#f0f0f0]">±</button>}
        <input
          id={id}
          defaultValue={value}
          disabled={disabled}
          autoFocus={focus}
          onFocus={focus ? (e) => e.currentTarget.select() : undefined}
          className={`min-w-0 flex-1 h-[19px] px-[2px] outline-none selection:bg-[#3399ff] selection:text-white ${disabled ? 'bg-[#f0f0f0] text-[#8a8a8a]' : 'bg-[#ffffa0]'}`}
        />
        <div className="w-[17px] shrink-0 flex flex-col gap-px px-px">
          <button aria-label="Więcej" disabled={disabled} className="h-[9px] flex items-center justify-center border border-[#b4b4b4] bg-[#f2f2f2]"><Tri className={`rotate-180 scale-75 ${disabled ? 'text-[#a0a0a0]' : 'text-[#4a5a88]'}`} /></button>
          <button aria-label="Mniej" disabled={disabled} className="h-[9px] flex items-center justify-center border border-[#b4b4b4] bg-[#f2f2f2]"><Tri className={`scale-75 ${disabled ? 'text-[#a0a0a0]' : 'text-[#4a5a88]'}`} /></button>
        </div>
      </div>
    </div>
  )
}

function PatternDialog() {
  return (
    <div role="dialog" aria-labelledby="dlg-title" className={`absolute left-[141px] top-[275px] w-[402px] text-[11px] text-black border border-[#1c2c3c] rounded-t-md bg-[#8fd4f0] ${SANS}`}>
      <div className={`h-[22px] flex items-center justify-between pl-[6px] pr-1 rounded-t-md bg-linear-to-b from-[#b3cbe6] to-[#8fb2da] ${UI}`}>
        <h2 id="dlg-title">Wzór Kołowy</h2>
        <div className="flex gap-[2px]">
          <button aria-label="Pomoc" className="w-7 h-[15px] flex items-center justify-center border border-[#6c84a4] rounded-sm bg-linear-to-b from-[#d4e2f2] to-[#a8c0dc] font-bold text-white [text-shadow:0_0_2px_#000]">?</button>
          <button aria-label="Zamknij" className="w-7 h-[15px] flex items-center justify-center border border-[#5c1c14] rounded-sm bg-linear-to-b from-[#e09888] to-[#b83020]">
            <svg viewBox="0 0 12 10" className="w-[11px] h-[9px]" fill="#fff" stroke="#602018"><path d="M1 .500h3l2 2.500L8 .500h3L8 5l3 4.500H8L6 7 4 9.500H1L4 5z" /></svg>
          </button>
        </div>
      </div>
      <form className="mx-[2px] mb-[2px] bg-[#f0f0f0] px-[9px] pt-[10px] pb-[13px]" onSubmit={(e) => e.preventDefault()}>
        <div className="flex items-center gap-[3px]">
          <label htmlFor="nazwa">Nazwa</label>
          <input id="nazwa" defaultValue="Wzór kołowy-1" className="w-[134px] h-[23px] px-[2px] bg-white border border-[#dadde2]" />
        </div>
        <div className="mt-[7px] flex gap-2">
          <fieldset className="w-[209px] border border-[#dcdcdc] px-[11px] pb-3">
            <legend className="-ml-1 px-[2px] leading-4">Parametry</legend>
            <div className="pl-[9px] pr-[19px] pt-[9px]"><button className={`${btn} w-full`}>Wybierz Oś</button></div>
            <div className="pt-[10px] pb-2 -mr-px">
              <Spin id="katowo" label="Ilość Kątowo" value="12" focus />
              <Spin id="kat" label="Odsunięcie kątowe" value="30deg" prefix />
              <Spin id="prom" label="Ilość Promieniowo" value="1" />
              <Spin id="odsprom" label="Odsunięcie prom." value="10mm" disabled />
            </div>
            <div className="pl-[9px] pr-[19px]"><button disabled className="w-full h-6 border border-[#b4b4b4] rounded-[3px] bg-[#f4f4f4] text-[#8a8a8a] whitespace-nowrap">Wybierz Punkt Odniesienia</button></div>
          </fieldset>
          <fieldset className="w-[158px] border border-[#dcdcdc] px-[10px]">
            <legend className="-ml-1 px-[2px] leading-4">Wybrane Elementy</legend>
            <div className="pt-[7px] grid grid-cols-2 gap-[6px]">
              <button className={btn}>Procedury</button>
              <button className={btn}>Lica</button>
            </div>
            <ul role="listbox" aria-label="Wybrane Elementy" className="mt-[10px] h-[112px] border border-[#70767e] bg-white p-px">
              <li role="option" aria-selected="true" className="h-[14px] leading-[14px] px-[2px] bg-[#3399ff] text-white">Otwór</li>
            </ul>
            <div className="mt-[10px] grid grid-cols-2 gap-[6px]">
              <button className={btn}>Usuń</button>
              <button className={btn}>Usuń wszys.</button>
            </div>
          </fieldset>
        </div>
        <div className="mt-[54px] pr-[2px] flex justify-end gap-[6px]">
          <button className="w-[66px] h-[22px] border-2 border-[#3c9cc8] rounded-[3px] bg-linear-to-b from-[#f3f3f3] to-[#d4d8da]">OK</button>
          <button className="w-[66px] h-[22px] border border-[#707070] rounded-[3px] bg-linear-to-b from-[#f3f3f3] to-[#cfcfcf]">Podgląd</button>
          <button className="w-[66px] h-[22px] border border-[#707070] rounded-[3px] bg-linear-to-b from-[#f3f3f3] to-[#cfcfcf]">Anuluj</button>
        </div>
      </form>
    </div>
  )
}

// red pen marks drawn over the whole window
function PenMarks() {
  return (
    <svg viewBox="0 0 1280 769" className="absolute left-0 top-0 w-[1280px] h-[769px] pointer-events-none" fill="none" stroke="#e01c28" strokeWidth="3" strokeLinecap="round" strokeLinejoin="round" aria-hidden="true">
      <path d="M320 367 414 233 713 271M694 261l19 10-23 8" />
      <path d="M506 405 820 411M795 403l25 9-22 9" />
      <path d="M1154 320 1060 624 531 495M569 487l-38 8 25 28" />
      <path d="M440 366c12-4 28-20 45-31" strokeWidth="4" />
      <g fill="#e01c28" strokeWidth="1" fontFamily="Liberation Sans">
        <text x="270" y="363" fontSize="42">1.</text>
        <text x="494" y="346" fontSize="48">2.</text>
      </g>
    </svg>
  )
}

export default function App() {
  return (
    <div className={`relative min-h-screen flex flex-col overflow-hidden bg-linear-to-r from-[#8db4e6] via-[#b3d2f3] to-[#d6e8fc] ${UI}`}>
      <TopBars />
      <div className="flex-1 flex">
        <LeftPanels />
        <ModelView />
        <RightRail />
      </div>
      <footer className={`h-5 flex items-center text-xs text-[#14203c] pr-[75px] ${SANS}`}>
        <span className="flex-1 pl-[6px]">Pomoc, wciśnij F1</span>
        <span className="h-[18px] w-[76px] mr-[2px] text-center text-[11px] leading-[18px] font-bold whitespace-nowrap bg-[#f0f0f0] text-[#b4b4b4]">Next Solution</span>
        <span className="h-[19px] w-[103px] mr-[2px] flex items-center justify-between pl-px pr-1 border-t border-l border-[#7c96b8]"><span>XC</span><span>0.000000mm</span></span>
        <span className="h-[19px] w-[103px] flex items-center justify-between pl-px pr-1 border-t border-l border-[#7c96b8]"><span>YC</span><span>0.000000mm</span></span>
      </footer>

      <div className="absolute right-0 top-[254px] w-[223px] h-6 flex items-center border border-[#c0d0e4] bg-linear-to-b from-white to-[#e4eefa]">
        {flyout.map(([label, icon], i) => (
          <button key={label} aria-label={label} className={`w-[22px] h-[22px] shrink-0 flex items-center justify-center ${i === 8 ? 'bg-[#f8cf92] border border-[#333a4c]' : ''}`}>{icon}</button>
        ))}
      </div>
      <div role="tooltip" className="absolute right-0 top-[286px] w-[141px] h-[42px] flex gap-[5px] pl-1 pt-[2px] text-[11px] whitespace-nowrap border border-[#9a9a9a] rounded-sm shadow-md bg-linear-to-b from-white to-[#e8eaf2] text-[#303030]">
        <PatternIcon />
        <div className="leading-[19px]">
          <p className="font-bold text-black">Wzór kołowy</p>
          <p>Tworzy wzór kołowy</p>
        </div>
      </div>
      <PatternDialog />
      <PenMarks />
    </div>
  )
}
